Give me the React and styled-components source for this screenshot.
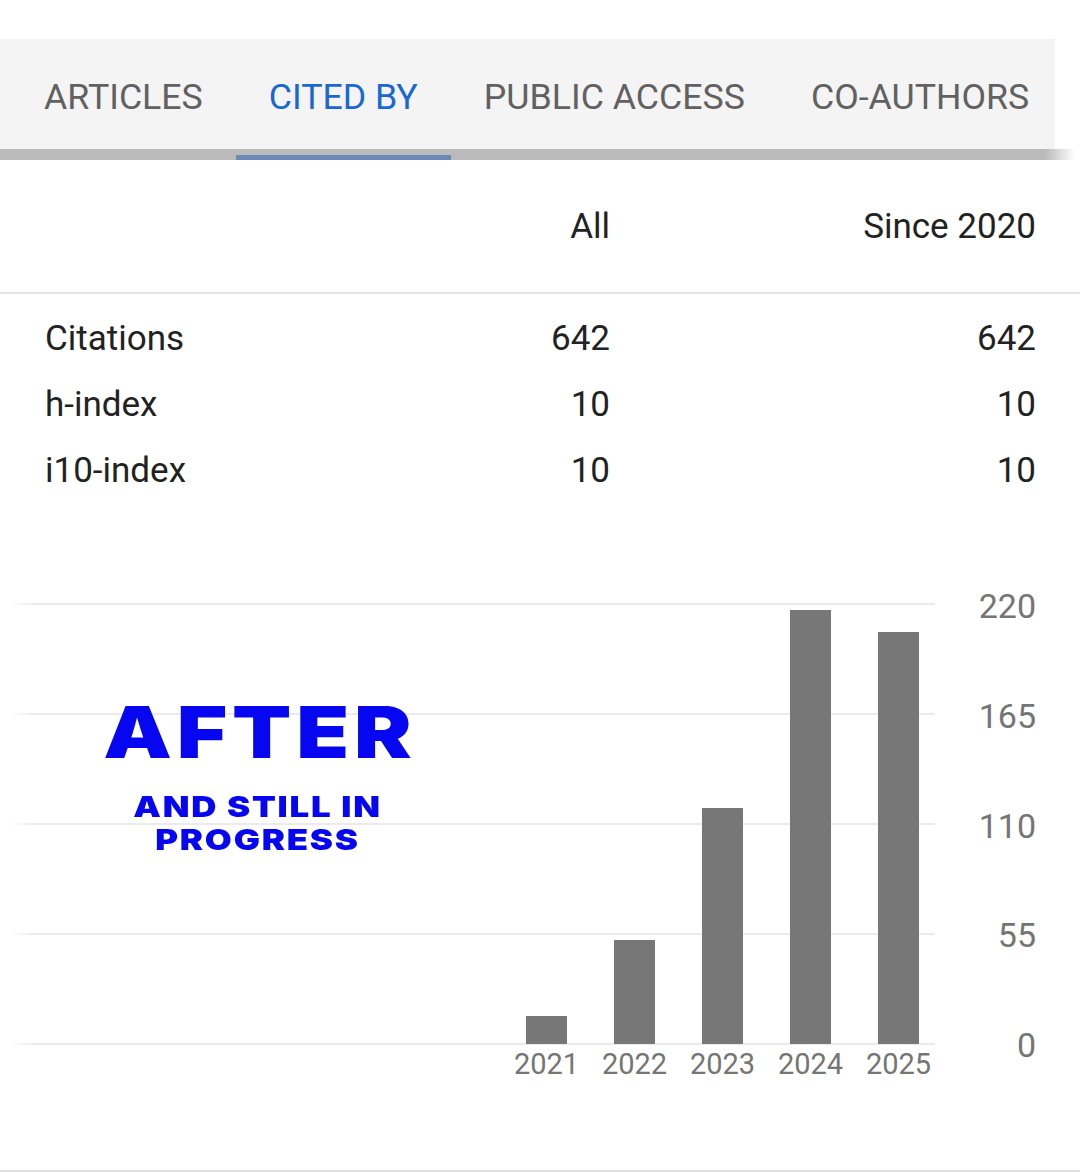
import styled, { createGlobalStyle } from "styled-components";

const GlobalStyle = createGlobalStyle`
  body {
    margin: 0;
    background: #ffffff;
    font-family: Roboto, "Liberation Sans", Arial, sans-serif;
  }
`;

const tabs = ["ARTICLES", "CITED BY", "PUBLIC ACCESS", "CO-AUTHORS"];

const stats = [
  { label: "Citations", all: 642, since: 642 },
  { label: "h-index", all: 10, since: 10 },
  { label: "i10-index", all: 10, since: 10 },
];

const years = [
  { year: 2021, count: 14 },
  { year: 2022, count: 52 },
  { year: 2023, count: 118 },
  { year: 2024, count: 217 },
  { year: 2025, count: 206 },
];

const ticks = [220, 165, 110, 55, 0];
const MAX = 220;
const PLOT_H = 440;

const App = () => {
  return (
    <>
      <GlobalStyle />
      <Page>
        <TabBar>
          <Tabs>
            {tabs.map((t) => (
              <Tab key={t} active={t === "CITED BY"}>
                {t}
              </Tab>
            ))}
          </Tabs>
          <Shade />
        </TabBar>

        <StatsHead>
          <span />
          <HeadCell>All</HeadCell>
          <HeadCell>Since 2020</HeadCell>
        </StatsHead>
        <StatsBody>
          {stats.map((s) => (
            <StatRow key={s.label}>
              <span>{s.label}</span>
              <Num>{s.all}</Num>
              <Num>{s.since}</Num>
            </StatRow>
          ))}
        </StatsBody>

        <Chart>
          <PlotCol>
            <Plot>
              {years.map((y) => (
                <BarCol key={y.year}>
                  <Bar style={{ height: (y.count / MAX) * PLOT_H }} />
                </BarCol>
              ))}
            </Plot>
            <Years>
              {years.map((y) => (
                <BarCol key={y.year}>
                  <Year>{y.year}</Year>
                </BarCol>
              ))}
            </Years>
          </PlotCol>
          <Axis>
            {ticks.map((t) => (
              <Tick key={t}>{t}</Tick>
            ))}
          </Axis>

          <Stamp>
            <Big>AFTER</Big>
            <Small>
              AND STILL IN
              <br />
              PROGRESS
            </Small>
          </Stamp>
        </Chart>

        <Footer />
      </Page>
    </>
  );
};

export default App;

const Page = styled.div`
  width: 1080px;
  padding-top: 39px;
`;

const TabBar = styled.div`
  display: flex;
  flex-direction: column;
`;

const Tabs = styled.div`
  display: flex;
  height: 110px;
  margin-right: 25px;
  padding-left: 11px;
  background: #f4f4f4;
`;

const Tab = styled.div`
  position: relative;
  flex-shrink: 0;
  display: flex;
  align-items: center;
  padding: 5px 33px 0;
  font-size: 35.7px;
  white-space: nowrap;
  color: ${(props) => (props.active ? "#1967d2" : "#616161")};

  &::after {
    content: "";
    display: ${(props) => (props.active ? "block" : "none")};
    position: absolute;
    left: 0;
    right: 0;
    bottom: -11px;
    height: 5px;
    background: #6b89b8;
  }
`;

const Shade = styled.div`
  height: 11px;
  background: linear-gradient(
    to right,
    #bababa 0,
    #bababa calc(100% - 35px),
    rgba(186, 186, 186, 0) calc(100% - 5px)
  );
`;

const statGrid = `
  display: grid;
  grid-template-columns: 1fr 200px 426px;
  padding: 0 44px 0 45px;
  font-size: 35px;
  color: #222222;
`;

const StatsHead = styled.div`
  ${statGrid}
  padding-top: 47px;
  padding-bottom: 45px;
  line-height: 40px;
  border-bottom: 2px solid #e3e3e3;
`;

const HeadCell = styled.span`
  text-align: right;
`;

const StatsBody = styled.div`
  padding-top: 12px;
`;

const StatRow = styled.div`
  ${statGrid}
  line-height: 66px;
`;

const Num = styled.span`
  text-align: right;
`;

const Chart = styled.div`
  position: relative;
  display: grid;
  grid-template-columns: 925px 1fr;
  margin-top: 99px;
  padding-left: 10px;
  padding-right: 44px;
`;

const PlotCol = styled.div`
  display: flex;
  flex-direction: column;
`;

const Plot = styled.div`
  display: flex;
  align-items: flex-end;
  justify-content: flex-end;
  gap: 47px;
  height: 442px;
  box-sizing: border-box;
  padding: 0 16px 1px 0;
  background: repeating-linear-gradient(
    to bottom,
    #ebebeb 0,
    #ebebeb 2px,
    transparent 2px,
    transparent 110px
  );
  -webkit-mask-image: linear-gradient(to right, transparent 0, #000 25px);
  mask-image: linear-gradient(to right, transparent 0, #000 25px);
`;

const Years = styled.div`
  display: flex;
  justify-content: flex-end;
  gap: 47px;
  padding-right: 16px;
  margin-top: 2px;
`;

const BarCol = styled.div`
  display: flex;
  flex-direction: column;
  align-items: center;
  width: 41px;
`;

const Bar = styled.div`
  width: 41px;
  background: #777777;
`;

const Year = styled.span`
  white-space: nowrap;
  font-size: 29px;
  line-height: 34px;
  color: #757575;
`;

const Axis = styled.div`
  display: flex;
  flex-direction: column;
  justify-content: space-between;
  align-items: flex-end;
  height: 442px;
  box-sizing: border-box;
  padding: 3px 0 0;
`;

const Tick = styled.span`
  font-size: 34px;
  line-height: 0;
  height: 0;
  color: #757575;
`;

const Stamp = styled.div`
  position: absolute;
  top: 93px;
  left: 0;
  width: 515px;
  display: flex;
  flex-direction: column;
  align-items: center;
  font-family: Inter, "DejaVu Sans", sans-serif;
  font-weight: 900;
  color: #0606f0;
  text-align: center;
  transform: scaleX(1.2);
`;

const Big = styled.div`
  font-size: 72px;
  line-height: 72px;
  letter-spacing: 4px;
  margin-right: -4px;
`;

const Small = styled.div`
  margin-top: 22px;
  font-size: 29px;
  line-height: 33px;
  letter-spacing: 1.5px;
`;

const Footer = styled.div`
  margin-top: 89px;
  border-top: 2px solid #e0e0e0;
`;
